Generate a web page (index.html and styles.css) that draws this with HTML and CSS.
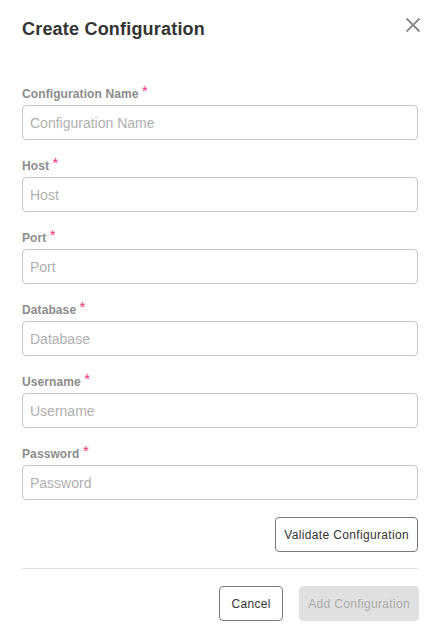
FILE: index.html
```html
<!DOCTYPE html>
<html>
<head>
<meta charset="utf-8">
<link rel="stylesheet" href="styles.css">
</head>
<body>
<div class="dialog">
  <div class="header">
    <h1 class="title">Create Configuration</h1>
    <button class="close" aria-label="Close">
      <svg width="16" height="16" viewBox="0 0 16 16"><path d="M1.5 1.5 L14.5 14.5 M14.5 1.5 L1.5 14.5" stroke="#8a8a8a" stroke-width="1.8" fill="none"/></svg>
    </button>
  </div>
  <form class="form">
    <div class="field">
      <label class="label">Configuration Name <span class="req">*</span></label>
      <input class="input" placeholder="Configuration Name">
    </div>
    <div class="field">
      <label class="label">Host <span class="req">*</span></label>
      <input class="input" placeholder="Host">
    </div>
    <div class="field">
      <label class="label">Port <span class="req">*</span></label>
      <input class="input" placeholder="Port">
    </div>
    <div class="field">
      <label class="label">Database <span class="req">*</span></label>
      <input class="input" placeholder="Database">
    </div>
    <div class="field">
      <label class="label">Username <span class="req">*</span></label>
      <input class="input" placeholder="Username">
    </div>
    <div class="field">
      <label class="label">Password <span class="req">*</span></label>
      <input class="input" placeholder="Password">
    </div>
    <div class="validate-row">
      <button type="button" class="btn btn-outline">Validate Configuration</button>
    </div>
  </form>
  <div class="footer">
    <button type="button" class="btn btn-outline btn-cancel">Cancel</button>
    <button type="button" class="btn btn-disabled">Add Configuration</button>
  </div>
</div>
</body>
</html>
```
FILE: styles.css
```css
* { box-sizing: border-box; }
html, body { margin: 0; padding: 0; background: #fff; }
body { font-family: "Liberation Sans", Arial, sans-serif; color: #333; }

.dialog {
  width: 442px;
  padding: 0 24px 0 22px;
}

.header {
  display: flex;
  justify-content: space-between;
  align-items: flex-start;
  padding-top: 17px;
}
.title {
  margin: 0;
  font-size: 18px;
  line-height: 24px;
  font-weight: bold;
  letter-spacing: 0.2px;
  color: #333;
}
.close {
  border: 0;
  background: none;
  padding: 0;
  margin: 0 -3px 0 0;
  width: 16px;
  height: 16px;
  display: flex;
}

.form {
  display: flex;
  flex-direction: column;
  padding-top: 45px;
}
.field {
  display: flex;
  flex-direction: column;
  margin-bottom: 18px;
}
.label {
  font-size: 12px;
  line-height: 16px;
  font-weight: bold;
  letter-spacing: 0.1px;
  color: #8c8c8c;
  margin-bottom: 3px;
}
.req {
  color: #f0327a;
  font-size: 15px;
  font-weight: normal;
  vertical-align: 2px;
  line-height: 10px;
}
.input {
  height: 35px;
  width: 100%;
  border: 1px solid #c4c4c4;
  border-radius: 4px;
  padding: 0 7px;
  font-family: "Liberation Sans", Arial, sans-serif;
  font-size: 14px;
  color: #333;
  outline: none;
}
.input::placeholder { color: #b0b0b0; }

.validate-row {
  display: flex;
  justify-content: flex-end;
  margin-top: -1px;
  padding-bottom: 16px;
  border-bottom: 1px solid #e0e0e0;
}

.btn {
  height: 35px;
  min-width: 64px;
  padding: 0 8px;
  border-radius: 4px;
  font-family: "Liberation Sans", Arial, sans-serif;
  font-size: 12px;
  letter-spacing: 0.34px;
  background: #fff;
}
.btn-cancel { width: 64px; }
.btn-outline {
  border: 1px solid #7a7a7a;
  color: #333;
}
.btn-disabled {
  border: 1px solid #e0e0e0;
  background: #e0e0e0;
  color: #ababab;
  margin-right: -1px;
}

.footer {
  display: flex;
  justify-content: flex-end;
  gap: 16px;
  padding-top: 17px;
}
```
